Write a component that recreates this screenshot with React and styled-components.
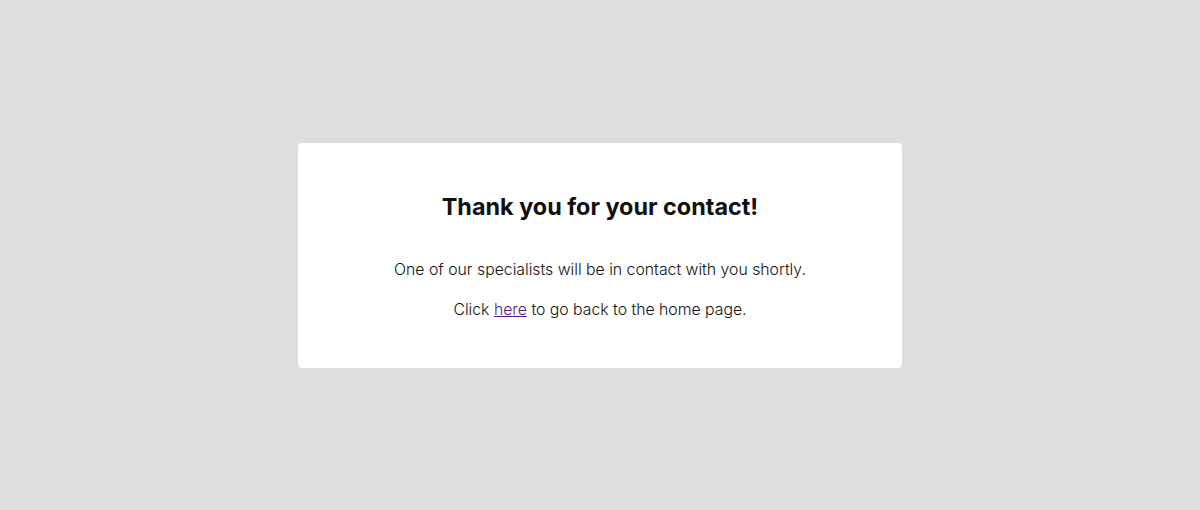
import styled, { createGlobalStyle } from 'styled-components';

const GlobalStyle = createGlobalStyle`
  html, body {
    margin: 0;
    padding: 0;
    background: #dedede;
  }
  body {
    font-family: Inter, "Noto Sans", sans-serif;
  }
`;

const Page = styled.main`
  display: flex;
  align-items: center;
  justify-content: center;
  height: 510px;
  width: 100%;
`;

const Card = styled.section`
  width: 604px;
  box-sizing: border-box;
  background: #ffffff;
  border-radius: 4px;
  padding: 49px 24px 46px;
  text-align: center;
`;

const Title = styled.h1`
  margin: 0 0 37px;
  font-size: 23.4px;
  line-height: 29px;
  font-weight: 700;
  color: #111111;
`;

const Text = styled.p`
  margin: 0 0 16px;
  font-size: 15.8px;
  line-height: 24px;
  font-weight: 300;
  color: #111111;

  &:last-child {
    margin-bottom: 0;
  }
`;

const Link = styled.a`
  color: #551a8b;
  text-decoration: underline;
`;

export default function App() {
  return (
    <>
      <GlobalStyle />
      <Page>
        <Card>
          <Title>Thank you for your contact!</Title>
          <Text>One of our specialists will be in contact with you shortly.</Text>
          <Text>
            Click <Link href="#">here</Link> to go back to the home page.
          </Text>
        </Card>
      </Page>
    </>
  );
}
